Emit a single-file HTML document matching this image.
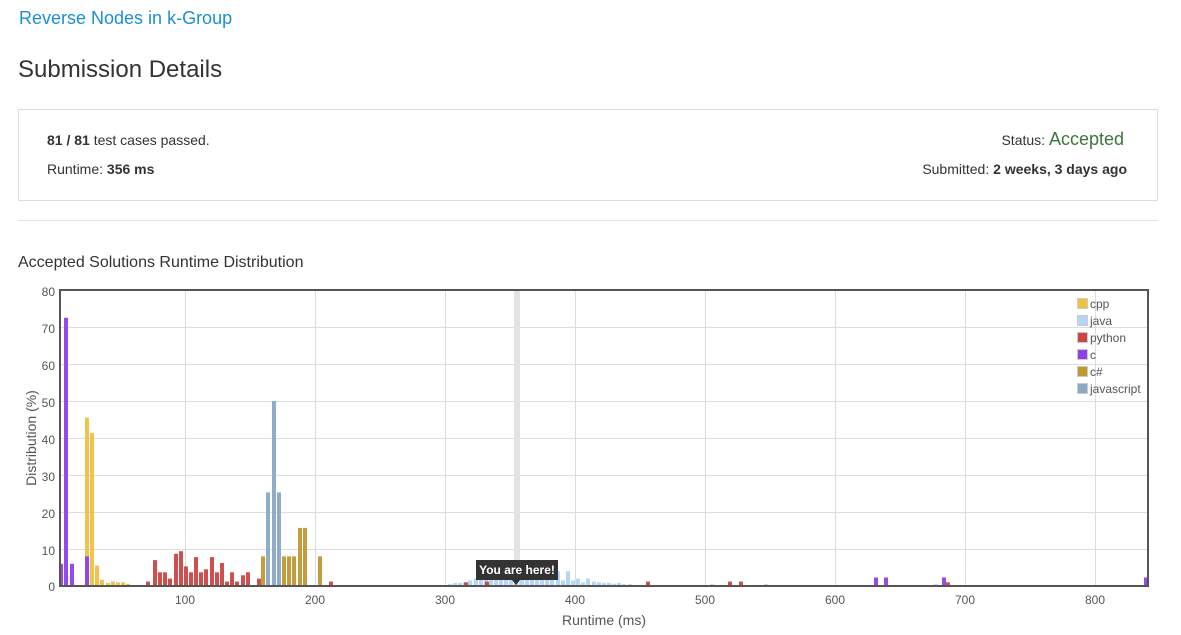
<!DOCTYPE html>
<html><head><meta charset="utf-8"><style>
body{margin:0;background:#fff;font-family:"Liberation Sans",sans-serif;color:#333;width:1181px;height:635px;overflow:hidden;position:relative}
.a{position:absolute}
</style></head><body>
<div class="a" style="left:19px;top:8px;font-size:18px;color:#1a8fd6">Reverse Nodes in k-Group</div>
<div class="a" style="left:18px;top:56px;font-size:24px;color:#333">Submission Details</div>
<div class="a" style="left:18px;top:109px;width:1138px;height:90px;border:1px solid #ddd"></div>
<div class="a" style="left:47px;top:132px;font-size:14px"><b>81 / 81</b> test cases passed.</div>
<div class="a" style="left:47px;top:161px;font-size:14px">Runtime: <b>356 ms</b></div>
<div class="a" style="right:57px;top:129px;font-size:14px">Status: <span style="color:#3c763d;font-size:18px">Accepted</span></div>
<div class="a" style="right:54px;top:161px;font-size:14px">Submitted: <b>2 weeks, 3 days ago</b></div>
<div class="a" style="left:18px;top:220px;width:1140px;border-top:1px solid #e5e5e5"></div>
<div class="a" style="left:18px;top:254px;font-size:16px">Accepted Solutions Runtime Distribution</div>
<svg class="a" style="left:0;top:0" width="1181" height="635" font-family="Liberation Sans, sans-serif">
<g stroke="#ddd" stroke-width="1">
<line x1="60" x2="1148" y1="327.5" y2="327.5"/><line x1="60" x2="1148" y1="364.5" y2="364.5"/><line x1="60" x2="1148" y1="401.5" y2="401.5"/><line x1="60" x2="1148" y1="438.5" y2="438.5"/><line x1="60" x2="1148" y1="475.5" y2="475.5"/><line x1="60" x2="1148" y1="512.5" y2="512.5"/><line x1="60" x2="1148" y1="549.5" y2="549.5"/>
<line y1="290" y2="586" x1="185.5" x2="185.5"/><line y1="290" y2="586" x1="315.5" x2="315.5"/><line y1="290" y2="586" x1="445.5" x2="445.5"/><line y1="290" y2="586" x1="575.5" x2="575.5"/><line y1="290" y2="586" x1="705.5" x2="705.5"/><line y1="290" y2="586" x1="835.5" x2="835.5"/><line y1="290" y2="586" x1="965.5" x2="965.5"/><line y1="290" y2="586" x1="1095.5" x2="1095.5"/>
</g>
<rect x="514" y="290" width="6" height="296" fill="#e3e3e3"/>
<g id="bars"></g>
<rect x="60" y="290" width="1088" height="296" fill="none" stroke="#555" stroke-width="2"/>
<g font-size="12" fill="#555" text-anchor="end">
<text x="55" y="296">80</text><text x="55" y="333">70</text><text x="55" y="370">60</text><text x="55" y="407">50</text><text x="55" y="444">40</text><text x="55" y="481">30</text><text x="55" y="518">20</text><text x="55" y="555">10</text><text x="55" y="591">0</text>
</g>
<g font-size="12" fill="#555" text-anchor="middle">
<text x="185" y="604">100</text><text x="315" y="604">200</text><text x="445" y="604">300</text><text x="575" y="604">400</text><text x="705" y="604">500</text><text x="835" y="604">600</text><text x="965" y="604">700</text><text x="1095" y="604">800</text>
<text x="604" y="625" font-size="14">Runtime (ms)</text>
<text transform="translate(36,438) rotate(-90)" font-size="14">Distribution (%)</text>
</g>
<g font-size="12" fill="#555">
<rect x="1077.5" y="298.5" width="10" height="10" fill="#f0c040" stroke="#ccc"/><text x="1090" y="308">cpp</text>
<rect x="1077.5" y="315.5" width="10" height="10" fill="#b5d6f5" stroke="#ccc"/><text x="1090" y="325">java</text>
<rect x="1077.5" y="332.5" width="10" height="10" fill="#cc4444" stroke="#ccc"/><text x="1090" y="342">python</text>
<rect x="1077.5" y="349.5" width="10" height="10" fill="#9040e8" stroke="#ccc"/><text x="1090" y="359">c</text>
<rect x="1077.5" y="366.5" width="10" height="10" fill="#c09830" stroke="#ccc"/><text x="1090" y="376">c#</text>
<rect x="1077.5" y="383.5" width="10" height="10" fill="#8aa8c8" stroke="#ccc"/><text x="1090" y="393">javascript</text>
</g>
<g id="tip">
<rect x="476" y="560" width="82" height="20" fill="#333"/>
<polygon points="512,580 520,580 516,585" fill="#333"/>
<text x="517" y="574" fill="#fff" font-size="12" font-weight="bold" text-anchor="middle">You are here!</text>
</g>
</svg>
<script>
var C={c:"#9040e8",p:"#f0c040",py:"#cc4444",cs:"#c09830",js:"#8aa8c8",j:"#b5d6f5"};
var d=[["c",61,6],["c",66,72.5],["c",72,6],["p",87,45.5],["c",87,8],["p",92,41.3],["p",97,5.5],["p",102,1.7],["p",108,0.8],["p",113,1.2],["p",118,1],["p",123,1],["p",128,0.6],
["py",148,1.2],["py",155,7],["py",160,3.7],["py",165,3.7],["py",170,2],["py",176,8.7],["py",181,9.4],["py",186,5.3],["py",191,3.7],["py",196,7.8],["py",201,3.7],["py",206,4.5],["py",212,7.8],["py",217,3.7],["py",222,6.2],["py",227,1.2],["py",232,3.7],["py",237,1.2],["py",243,2.9],["py",248,3.7],["py",259,2],
["cs",263,8],["js",268,25.3],["js",274,50],["js",279,25.3],["cs",284,8],["cs",289,8],["cs",294,8],["cs",300,15.7],["cs",305,15.7],["cs",320,8],["py",331,1.2],
["py",466,1],["py",487,1.2],["py",648,1.2],["py",730,1.2],["py",741,1.2],["c",876,2.3],["c",886,2.3],["c",944,2.3],["py",948,1],["c",1146,2.3]];
var jv=[[450,.5],[455,.8],[460,.8],[465,1],[470,1.5],[476,2],[481,2],[486,2],[491,2.5],[496,2.5],[501,3],[506,2.5],[511,3],[516,3],[522,3],[527,3.5],[532,3],[537,3],[542,3.5],[547,3],[552,3.5],[558,4],[563,1.5],[568,4],[573,1.5],[578,2],[583,1],[588,2],[594,1.2],[599,1],[604,.8],[609,.8],[614,.6],[619,.8],[624,.5],[630,.5],[712,.5],[766,.5],[936,.5]];
var s="";jv.forEach(function(b){var h=b[1]*3.7;s+='<rect x="'+(b[0]-2)+'" y="'+(586-h)+'" width="4" height="'+h+'" fill="'+C.j+'"/>';});
d.forEach(function(b){var h=b[2]*3.7;s+='<rect x="'+(b[1]-2)+'" y="'+(586-h)+'" width="4" height="'+h+'" fill="'+C[b[0]]+'" opacity="0.95"/>';});
document.getElementById("bars").innerHTML=s;
</script>
</body></html>
